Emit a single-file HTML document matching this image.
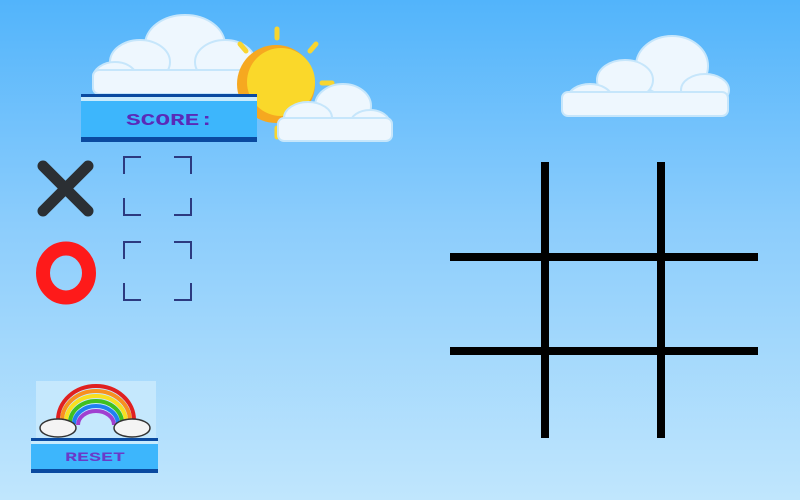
<!DOCTYPE html>
<html><head><style>
html,body{margin:0;padding:0}
body{width:800px;height:500px;overflow:hidden;background:linear-gradient(#52b4fb 0%,#8ccdfc 45%,#c0e6fd 100%);position:relative;font-family:"Liberation Mono",monospace}
svg{position:absolute;left:0;top:0}
</style></head><body>
<svg width="800" height="500" viewBox="0 0 800 500">
<g fill="#eef7fe" stroke="#c6e6fb" stroke-width="2">
<ellipse cx="185" cy="45" rx="40" ry="30"/>
<ellipse cx="140" cy="62" rx="30" ry="22"/>
<ellipse cx="225" cy="62" rx="30" ry="22"/>
<ellipse cx="115" cy="78" rx="22" ry="16"/>
<rect x="93" y="70" width="160" height="24" rx="6"/>
</g>
<g stroke="#f8d530" stroke-width="5" stroke-linecap="round">
<line x1="277" y1="29" x2="277" y2="38"/>
<line x1="240" y1="44" x2="246" y2="51"/>
<line x1="316" y1="44" x2="310" y2="51"/>
<line x1="322" y1="83" x2="332" y2="83"/>
<line x1="277" y1="128" x2="277" y2="137"/>
</g>
<circle cx="276" cy="84" r="39" fill="#f6a820"/>
<circle cx="281" cy="82" r="34" fill="#fad82a"/>
<g fill="#eef7fe" stroke="#c6e6fb" stroke-width="2">
<ellipse cx="343" cy="106" rx="28" ry="22"/>
<ellipse cx="308" cy="118" rx="24" ry="16"/>
<ellipse cx="370" cy="124" rx="20" ry="14"/>
<rect x="278" y="118" width="114" height="23" rx="6"/>
<ellipse cx="672" cy="66" rx="36" ry="30"/>
<ellipse cx="625" cy="80" rx="28" ry="20"/>
<ellipse cx="705" cy="90" rx="24" ry="16"/>
<ellipse cx="590" cy="98" rx="22" ry="14"/>
<rect x="562" y="92" width="166" height="24" rx="6"/>
</g>
<rect x="81" y="94" width="176" height="48" fill="#0a4aa0"/>
<rect x="81" y="97" width="176" height="4" fill="#c8ebfd"/>
<rect x="81" y="101" width="176" height="36" fill="#3db6fc"/>
<text x="170" y="125" font-family="Liberation Mono,monospace" font-weight="bold" font-size="17" fill="#5a2ab8" text-anchor="middle" textLength="88" lengthAdjust="spacingAndGlyphs">SCORE:</text>
<g stroke="#2b2f33" stroke-width="11" stroke-linecap="round">
<line x1="43" y1="166" x2="88" y2="211"/><line x1="88" y1="166" x2="43" y2="211"/>
</g>
<ellipse cx="66" cy="273" rx="23" ry="24.5" fill="none" stroke="#fe1a1a" stroke-width="14"/>
<g fill="none" stroke="#2c3a80" stroke-width="2">
<path d="M124 174V157H141M174 157H191V174M191 198V215H174M141 215H124V198"/>
<path d="M124 259V242H141M174 242H191V259M191 283V300H174M141 300H124V283"/>
</g>
<g fill="#000">
<rect x="541" y="162" width="8" height="276"/>
<rect x="657" y="162" width="8" height="276"/>
<rect x="450" y="253" width="308" height="8"/>
<rect x="450" y="347" width="308" height="8"/>
</g>
<rect x="36" y="381" width="120" height="60" fill="#c5e8fd"/>
<g fill="none" stroke-width="4">
<path d="M58 420A38 34 0 0 1 134 420" stroke="#e02020"/>
<path d="M62 421A34 30 0 0 1 130 421" stroke="#f89020"/>
<path d="M66 422A30 26 0 0 1 126 422" stroke="#f8e020"/>
<path d="M70 423A26 22 0 0 1 122 423" stroke="#40c020"/>
<path d="M74 424A22 18 0 0 1 118 424" stroke="#2080f0"/>
<path d="M78 425A18 14 0 0 1 114 425" stroke="#a040d0"/>
</g>
<g fill="#f4f4f4" stroke="#333" stroke-width="1.5">
<ellipse cx="58" cy="428" rx="18" ry="9"/>
<ellipse cx="132" cy="428" rx="18" ry="9"/>
</g>
<rect x="31" y="438" width="127" height="35" fill="#0a4aa0"/>
<rect x="31" y="441" width="127" height="3" fill="#c8ebfd"/>
<rect x="31" y="444" width="127" height="25" fill="#3db6fc"/>
<text x="95" y="461" font-family="Liberation Mono,monospace" font-weight="bold" font-size="13" fill="#6a3ac8" text-anchor="middle" textLength="60" lengthAdjust="spacingAndGlyphs">RESET</text>
</svg>
</body></html>
